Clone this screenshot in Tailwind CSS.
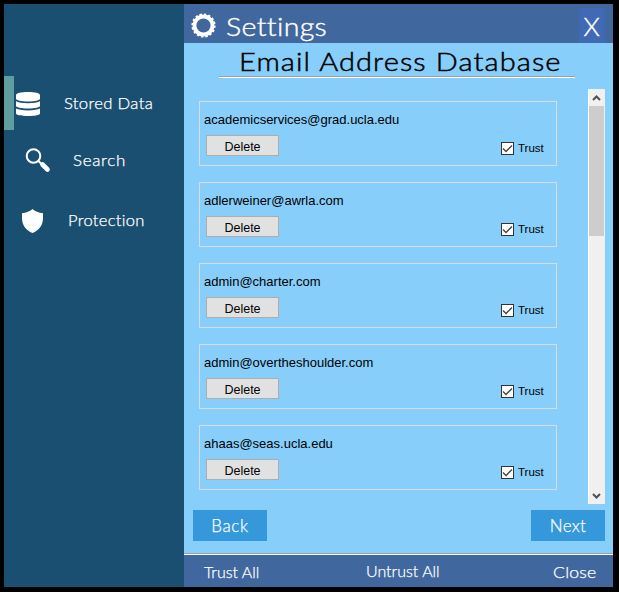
<!DOCTYPE html>
<html lang="en">
<head>
<meta charset="utf-8">
<title>Settings</title>
<script src="https://cdn.jsdelivr.net/npm/@tailwindcss/browser@4"></script>
</head>
<body class="bg-black overflow-hidden font-['Century_Gothic','Lato',sans-serif] font-light text-white">
<div class="w-[619px] h-[592px] pt-1 pl-1 pr-[6px] pb-[5px] flex">
  <nav class="w-[180px] h-[583px] bg-[#1b4f72] pt-[72px] shrink-0 text-[15px] leading-none whitespace-nowrap [-webkit-text-stroke:0.25px]">
    <div class="flex items-center h-[54px]">
      <div class="w-[10px] h-[54px] bg-[#5f9ea0] mr-[2px]"></div>
      <svg class="w-6 h-6 mt-[2px]" viewBox="0 0 24 24" fill="#fff"><path d="M0 3.2C0 1.2 5 0 12 0s12 1.200 12 3.200V6.400C24 8.300 19 9.400 12 9.400S0 8.300 0 6.400ZM0 9.300c2 1.300 6.500 1.900 12 1.900s10-.6 12-1.900v4.500c0 1.700-5 2.700-12 2.700S0 15.500 0 13.800ZM0 16.600c2 1.200 6.500 1.800 12 1.800s10-.6 12-1.800v4.600C24 23 19 24 12 24S0 23 0 21.200Z"/></svg>
      <span class="ml-[24px] tracking-[0.3px] origin-left scale-x-[1.11]">Stored Data</span>
    </div>
    <div class="flex items-center h-[60px]">
      <svg class="w-[26px] h-[26px] ml-[21px]" viewBox="0 0 26 26" fill="none" stroke="#fff"><circle cx="8.500" cy="9" r="6.800" stroke-width="2"/><path d="M13 13.500l4 4" stroke-width="2"/><path d="M17.500 17.500l5 5" stroke-width="4.600" stroke-linecap="round"/></svg>
      <span class="ml-[22px] tracking-[0.6px] origin-left scale-x-[1.13]">Search</span>
    </div>
    <div class="flex items-center h-[60px]">
      <svg class="w-[21px] h-6 ml-[18px] mt-px" viewBox="0 0 21 24" fill="#fff"><path d="M10.500 0C8.500 2 4 3.800 0 4.200V9c0 7 4 12.500 10.500 15C17 21.500 21 16 21 9V4.200C17 3.800 12.500 2 10.500 0Z"/></svg>
      <span class="ml-[25px] tracking-[0.3px] origin-left scale-x-[1.1]">Protection</span>
    </div>
  </nav>
  <main class="w-[429px] h-[583px] bg-[#87cefa] flex flex-col">
    <header class="h-[39px] bg-[#41689e] flex items-center shrink-0 pl-[7px] pr-2">
      <svg class="w-[25px] h-[25px] mt-[3px]" viewBox="0 0 25 25" fill="none" stroke="#fff"><circle cx="12.500" cy="12.500" r="9" stroke-width="3.800"/><circle cx="12.500" cy="12.500" r="11" stroke-width="2.200" stroke-dasharray="2.400 1.920"/></svg>
      <h1 class="ml-[10px] mt-[5px] text-[26px] leading-[30px] tracking-[0.3px] origin-left scale-x-[1.1] [-webkit-text-stroke:0.4px]">Settings</h1>
      <button class="ml-auto w-[26px] h-[35px] mt-1 bg-[#4169b4] text-[26px] leading-[37px] pr-px [-webkit-text-stroke:0.4px]">X</button>
    </header>
    <div class="w-[356px] h-[34px] ml-[35px] border-b border-[#a0a0a0] shadow-[0_1px_0_#fff] shrink-0 text-black text-[26px] leading-[37px] whitespace-nowrap pl-[20px]"><h2 class="tracking-[1px] origin-left scale-x-[1.115] [-webkit-text-stroke:0.5px]">Email Address Database</h2></div>
    <div class="flex mt-3 h-[415px] shrink-0 font-['Liberation_Sans',Arial,sans-serif] font-normal text-black">
      <div id="list" class="w-[373px] ml-[15px] pt-3 flex flex-col gap-4"></div>
      <div class="ml-4 w-[17px] h-[415px] bg-[#f0f0f0] border-l border-white flex flex-col items-center">
        <svg class="w-[16px] h-[17px] shrink-0" viewBox="0 0 16 17" fill="none" stroke="#505050" stroke-width="2"><path d="M4 11l3.500-3.500L11 11"/></svg>
        <div class="w-[15px] h-[130px] bg-[#cdcdcd] mr-px"></div>
        <svg class="w-[16px] h-[17px] mt-auto" viewBox="0 0 16 17" fill="none" stroke="#505050" stroke-width="2"><path d="M4 7l3.500 3.500L11 7"/></svg>
      </div>
    </div>
    <div class="flex justify-between pl-[9px] pr-2 mt-[6px] text-[17px] [-webkit-text-stroke:0.25px]">
      <button class="w-[74px] h-[31px] bg-[#3498db] tracking-[0.6px]">Back</button>
      <button class="w-[74px] h-[31px] bg-[#3498db] tracking-[0.3px]">Next</button>
    </div>
    <footer class="mt-auto h-[34px] border-t border-[#a0a0a0] bg-[#41689e] shadow-[inset_0_1px_0_#fff] flex items-center pl-5 pr-[17px] pt-[3px] text-[16px] leading-none whitespace-nowrap [-webkit-text-stroke:0.25px]">
      <span class="w-[162px]">Trust All</span><span class="-mt-[2px]">Untrust All</span><span class="ml-auto origin-right tracking-[0.2px] scale-x-[1.1]">Close</span>
    </footer>
  </main>
</div>
<template id="row">
  <section class="w-[358px] h-[65px] border border-[#d9dcdc] pl-1 shrink-0">
    <div class="email text-[13px] leading-[15px] mt-[10px] whitespace-nowrap"></div>
    <div class="flex items-start mt-[8px] pl-[2px]">
      <button class="w-[73px] h-[21px] bg-[#e1e1e1] border border-[#adadad] text-[12.5px] leading-[19px] pt-[2px]">Delete</button>
      <label class="ml-[222px] mt-[7px] flex items-center gap-1 text-[11.5px] leading-[13px]"><svg class="w-[13px] h-[13px]" viewBox="0 0 13 13"><rect x=".5" y=".5" width="12" height="12" fill="#fff" stroke="#333"/><path d="M2 6.500l3 3L11 3.500" fill="none" stroke="#444" stroke-width="1.300"/></svg>Trust</label>
    </div>
  </section>
</template>
<script>
const emails = ["academicservices@grad.ucla.edu", "adlerweiner@awrla.com", "admin@charter.com", "admin@overtheshoulder.com", "ahaas@seas.ucla.edu"];
for (const e of emails) {
  const n = document.getElementById("row").content.cloneNode(true);
  n.querySelector(".email").textContent = e;
  document.getElementById("list").append(n);
}
</script>
</body>
</html>
